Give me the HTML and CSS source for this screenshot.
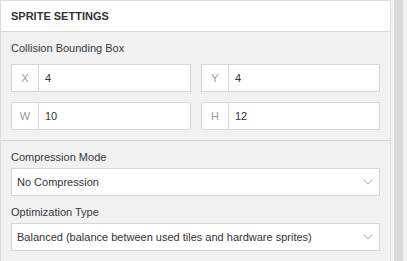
FILE: index.html
```html
<!DOCTYPE html>
<html>
<head>
<meta charset="utf-8">
<link rel="stylesheet" href="styles.css">
</head>
<body>
<div class="page">
  <div class="panel">
    <div class="panel-header">SPRITE SETTINGS</div>
    <div class="section">
      <div class="label">Collision Bounding Box</div>
      <div class="grid">
        <div class="input"><span class="addon">X</span><span class="value">4</span></div>
        <div class="input"><span class="addon">Y</span><span class="value">4</span></div>
        <div class="input"><span class="addon">W</span><span class="value">10</span></div>
        <div class="input"><span class="addon">H</span><span class="value">12</span></div>
      </div>
    </div>
    <div class="section section-last">
      <div class="label label-sel">Compression Mode</div>
      <div class="select">
        <span class="value">No Compression</span>
        <svg class="chev" width="10" height="6" viewBox="0 0 10 6"><path d="M0.5 0.5 L5 5 L9.5 0.5" fill="none" stroke="#c4c4c4" stroke-width="1.1"/></svg>
      </div>
      <div class="label label-sel label-2">Optimization Type</div>
      <div class="select">
        <span class="value">Balanced (balance between used tiles and hardware sprites)</span>
        <svg class="chev" width="10" height="6" viewBox="0 0 10 6"><path d="M0.5 0.5 L5 5 L9.5 0.5" fill="none" stroke="#c4c4c4" stroke-width="1.1"/></svg>
      </div>
    </div>
  </div>
  <div class="gutter"><div class="scrollbar"></div></div>
</div>
</body>
</html>
```
FILE: styles.css
```css
html, body {
  margin: 0;
  padding: 0;
  background: #f1f1f1;
  font-family: "Liberation Sans", Arial, sans-serif;
  font-size: 11px;
  color: #333;
}
.page {
  display: flex;
  height: 261px;
  overflow: hidden;
}
.panel {
  width: 389px;
  border-left: 1px solid #dcdcdc;
  border-right: 1px solid #e2e2e2;
  background: #f1f1f1;
  flex: none;
}
.panel-header {
  background: #fff;
  border-top: 1px solid #dcdcdc;
  border-bottom: 1px solid #d6d6d6;
  height: 30px;
  line-height: 30px;
  padding-left: 10px;
  font-weight: bold;
  color: #333;
}
.section {
  padding: 9px 10px 10px 10px;
  border-bottom: 1px solid #d6d6d6;
}
.section-last {
  border-bottom: none;
}
.label {
  line-height: 15px;
  margin-bottom: 8px;
  color: #34393f;
}
.label-sel {
  margin-bottom: 3px;
}
.label-2 {
  margin-top: 9px;
}
.grid {
  display: grid;
  grid-template-columns: 180px 179px;
  column-gap: 10px;
  row-gap: 10px;
}
.input {
  display: flex;
  height: 26px;
  background: #fff;
  border: 1px solid #d6d6d6;
  line-height: 26px;
}
.addon {
  width: 26px;
  border-right: 1px solid #d6d6d6;
  text-align: center;
  color: #999;
  flex: none;
}
.input .value {
  padding-left: 6px;
}
.select {
  display: flex;
  align-items: center;
  justify-content: space-between;
  height: 26px;
  background: #fff;
  border: 1px solid #d6d6d6;
  padding: 0 6px 0 5px;
}
.gutter {
  width: 4px;
  flex: none;
}
.scrollbar {
  width: 9px;
  height: 261px;
  background: #d9d9d9;
  margin-left: 3px;
}
```
